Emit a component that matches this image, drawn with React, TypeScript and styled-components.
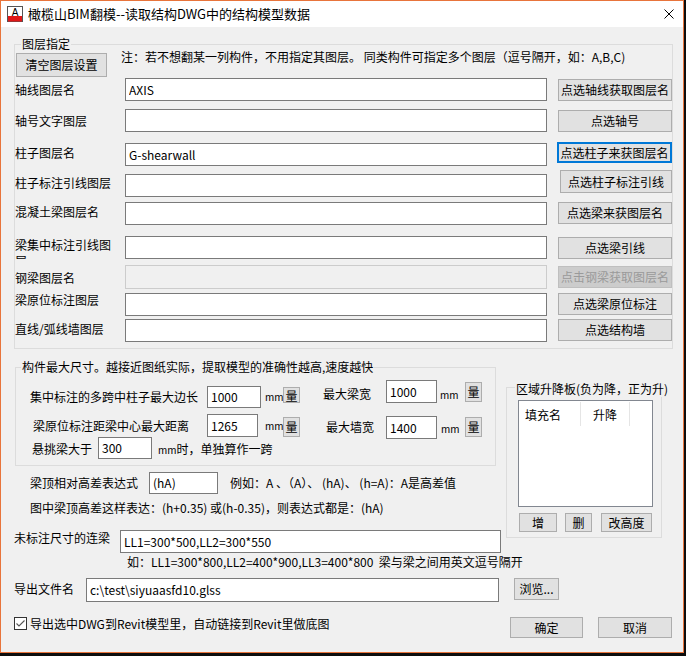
import React from 'react'
import styled, { createGlobalStyle, css } from 'styled-components'

interface Place {
  $ml?: number
  $mt?: number
}

const place = css<Place>`
  flex-shrink: 0;
  margin-left: ${p => p.$ml || 0}px;
  margin-top: ${p => p.$mt || 0}px;
`

const GlobalStyle = createGlobalStyle`
  html, body {
    margin: 0;
    padding: 0;
    background: #0d0d0d;
  }
  body {
    font-family: "Noto Sans CJK SC", "Noto Sans", sans-serif;
    font-size: 12px;
    color: #000;
  }
  * {
    box-sizing: border-box;
  }
`

const Window = styled.div`
  width: 684px;
  height: 653px;
  border: 1px solid #e8743b;
  background: #f0f0f0;
  display: flex;
  flex-direction: column;
  align-items: flex-start;
  overflow: hidden;
`

const TitleBar = styled.div`
  align-self: stretch;
  height: 26px;
  flex-shrink: 0;
  background: #fff;
  display: flex;
  align-items: center;
`

const TitleText = styled.div`
  margin-left: 5px;
  font-size: 13px;
  line-height: 16px;
  white-space: nowrap;
`

const CloseBox = styled.div`
  margin-left: auto;
  margin-right: 9px;
  width: 10px;
  height: 10px;
  display: flex;
`

const Group = styled.div<Place & { $w: number; $pb: number }>`
  ${place};
  position: relative;
  width: ${p => p.$w}px;
  border: 1px solid #dcdcdc;
  padding-bottom: ${p => p.$pb}px;
  display: flex;
  flex-direction: column;
  align-items: flex-start;
`

const Legend = styled.span<{ $left: number; $top?: number }>`
  position: absolute;
  left: ${p => p.$left}px;
  top: ${p => (p.$top ?? -9)}px;
  padding: 0 1px;
  line-height: 16px;
  background: #f0f0f0;
  white-space: nowrap;
`

const Line = styled.div<Place & { $h: number; $stretch?: boolean }>`
  ${place};
  display: flex;
  align-items: flex-start;
  height: ${p => p.$h}px;
  ${p => p.$stretch && css`
    align-self: stretch;
    margin-right: 11px;
  `}
`

const Txt = styled.div<Place & { $w?: number }>`
  ${place};
  width: ${p => (p.$w ? `${p.$w}px` : 'auto')};
  line-height: 16px;
  white-space: nowrap;
`

// unit label, drawn smaller like the dialog's 8pt latin font
const Unit = styled.span`
  font-size: 10px;
`

const LayerLabel = styled.div<{ $mt: number; $wrap?: boolean }>`
  flex-shrink: 0;
  width: 110px;
  padding-right: 10px;
  margin-top: ${p => p.$mt}px;
  line-height: 16px;
  white-space: ${p => (p.$wrap ? 'normal' : 'nowrap')};
  height: ${p => (p.$wrap ? '22px' : 'auto')};
  overflow: hidden;
`

const Field = styled.input<Place & { $w: number; $h: number }>`
  ${place};
  width: ${p => p.$w}px;
  height: ${p => p.$h}px;
  border: 1px solid #7a7a7a;
  background: #fff;
  padding: 0 3px 1px;
  font-family: inherit;
  font-size: 12px;
  color: #000;
  outline: none;

  &:disabled {
    background: #f0f0f0;
    border-color: #cccccc;
  }
`

const Btn = styled.button<Place & { $w: number; $h: number; $focus?: boolean }>`
  ${place};
  width: ${p => p.$w}px;
  height: ${p => p.$h}px;
  padding: 0;
  background: #e1e1e1;
  border: ${p => (p.$focus ? '2px solid #0078d7' : '1px solid #adadad')};
  font-family: inherit;
  font-size: 12px;
  line-height: 16px;
  color: #000;
  white-space: nowrap;

  &:disabled {
    background: #cccccc;
    border-color: #bfbfbf;
    color: #9a9a9a;
  }
`

const Middle = styled.div`
  display: flex;
  align-items: flex-start;
  margin-top: 18px;
  margin-left: 14px;
`

const LeftCol = styled.div`
  width: 491px;
  flex-shrink: 0;
  display: flex;
  flex-direction: column;
  align-items: flex-start;
`

const ListView = styled.div<Place>`
  ${place};
  width: 135px;
  height: 107px;
  border: 1px solid #828790;
  background: #fff;
`

const ListHead = styled.div`
  display: flex;
  height: 24px;
`

const HeadCell = styled.div<{ $w: number; $center?: boolean }>`
  width: ${p => p.$w}px;
  height: 24px;
  margin-top: 1px;
  padding-top: 5px;
  padding-left: ${p => (p.$center ? 0 : 6)}px;
  text-align: ${p => (p.$center ? 'center' : 'left')};
  line-height: 16px;
  border-right: 1px solid #e5e5e5;
`

const CheckBox = styled.div<Place>`
  ${place};
  width: 13px;
  height: 13px;
  display: flex;
`

const layerRows = [
  { label: '轴线图层名', value: 'AXIS', btn: '点选轴线获取图层名', mt: 1, lt: 4, bt: 1 },
  { label: '轴号文字图层', value: '', btn: '点选轴号', mt: 8, lt: 4, bt: 1 },
  { label: '柱子图层名', value: 'G-shearwall', btn: '点选柱子来获图层名', mt: 11, lt: 2, bt: -1, focus: true, bml: 10, bw: 115, bh: 21 },
  { label: '柱子标注引线图层', value: '', btn: '点选柱子标注引线', mt: 8, lt: 1, bt: -4, bml: 13, bw: 112, bh: 23 },
  { label: '混凝土梁图层名', value: '', btn: '点选梁来获图层名', mt: 5, lt: 2, bt: 0 },
  { label: '梁集中标注引线图层', value: '', btn: '点选梁引线', mt: 11, lt: 1, bt: 1, wrap: true },
  { label: '钢梁图层名', value: '', btn: '点击钢梁获取图层名', mt: 6, lt: 5, bt: 1, disabled: true, h: 24 },
  { label: '梁原位标注图层', value: '', btn: '点选梁原位标注', mt: 4, lt: -1, bt: 0 },
  { label: '直线/弧线墙图层', value: '', btn: '点选结构墙', mt: 3, lt: 2, bt: 0 },
]

const AppIcon = () => (
  <svg width="16" height="16" viewBox="0 0 16 16" style={{ marginLeft: 6, flexShrink: 0 }}>
    <rect x="0.5" y="0.5" width="15" height="15" fill="#fff" stroke="#555" />
    <rect x="1" y="10" width="14" height="5.5" fill="#e01818" />
    <text x="8" y="9.5" textAnchor="middle" fontSize="10" fontFamily="Liberation Sans, sans-serif" fill="#000">A</text>
  </svg>
)

export default function App() {
  return (
    <>
      <GlobalStyle />
      <Window>
        <TitleBar>
          <AppIcon />
          <TitleText>橄榄山BIM翻模--读取结构DWG中的结构模型数据</TitleText>
          <CloseBox>
            <svg width="10" height="10" viewBox="0 0 10 10">
              <path d="M0.5 0.5 L9.5 9.5 M9.5 0.5 L0.5 9.5" stroke="#000" strokeWidth="1" />
            </svg>
          </CloseBox>
        </TitleBar>

        <Group $ml={13} $mt={17} $w={659} $pb={6}>
          <Legend $left={6}>图层指定</Legend>
          <Line $mt={8} $h={24}>
            <Btn type="button" $ml={1} $w={91} $h={24}>清空图层设置</Btn>
            <Txt $ml={14} $mt={-4}>注：若不想翻某一列构件，不用指定其图层。 同类构件可指定多个图层（逗号隔开，如：A,B,C)</Txt>
          </Line>
          {layerRows.map(row => (
            <Line key={row.label} $mt={row.mt} $h={row.h || 23}>
              <LayerLabel $mt={row.lt} $wrap={row.wrap}>{row.label}</LayerLabel>
              <Field $w={422} $h={row.h || 23} defaultValue={row.value} disabled={row.disabled} readOnly />
              <Btn
                type="button"
                $ml={row.bml ?? 11}
                $mt={row.bt}
                $w={row.bw ?? 114}
                $h={row.bh ?? 22}
                $focus={row.focus}
                disabled={row.disabled}
              >
                {row.btn}
              </Btn>
            </Line>
          ))}
        </Group>

        <Middle>
          <LeftCol>
            <Group $w={481} $pb={6}>
              <Legend $left={5}>构件最大尺寸。越接近图纸实际，提取模型的准确性越高,速度越快</Legend>
              <Line $mt={11} $h={29}>
                <Txt $ml={14} $mt={10} $w={177}>集中标注的多跨中柱子最大边长</Txt>
                <Field $mt={7} $w={54} $h={22} defaultValue="1000" readOnly />
                <Txt $ml={4} $mt={9} $w={18}><Unit>mm</Unit></Txt>
                <Btn type="button" $mt={8} $w={17} $h={16}>量</Btn>
                <Txt $ml={23} $mt={7} $w={63}>最大梁宽</Txt>
                <Field $mt={1} $w={51} $h={23} defaultValue="1000" readOnly />
                <Txt $ml={3} $mt={7} $w={25}><Unit>mm</Unit></Txt>
                <Btn type="button" $mt={3} $w={17} $h={20}>量</Btn>
              </Line>
              <Line $mt={6} $h={25}>
                <Txt $ml={17} $mt={4} $w={174}>梁原位标注距梁中心最大距离</Txt>
                <Field $w={51} $h={23} defaultValue="1265" readOnly />
                <Txt $ml={7} $mt={3} $w={18}><Unit>mm</Unit></Txt>
                <Btn type="button" $mt={3} $w={17} $h={20}>量</Btn>
                <Txt $ml={26} $mt={5} $w={60}>最大墙宽</Txt>
                <Field $mt={2} $w={51} $h={23} defaultValue="1400" readOnly />
                <Txt $ml={4} $mt={6} $w={24}><Unit>mm</Unit></Txt>
                <Btn type="button" $mt={3} $w={17} $h={20}>量</Btn>
              </Line>
              <Line $mt={-2} $h={22}>
                <Txt $ml={16} $mt={4} $w={66}>悬挑梁大于</Txt>
                <Field $w={54} $h={22} defaultValue="300" readOnly />
                <Txt $ml={6} $mt={4}><Unit>mm</Unit>时，单独算作一跨</Txt>
              </Line>
            </Group>

            <Line $mt={6} $h={22}>
              <Txt $ml={15} $mt={3} $w={119}>梁顶相对高差表达式</Txt>
              <Field $w={69} $h={22} defaultValue="(hA)" readOnly />
              <Txt $ml={12} $mt={3}>例如：A 、（A）、 (hA)、 (h=A)：A是高差值</Txt>
            </Line>
            <Txt $ml={15} $mt={6}>图中梁顶高差这样表达：(h+0.35) 或(h-0.35)，则表达式都是：(hA)</Txt>
            <Line $mt={14} $h={23}>
              <Txt $ml={-1} $w={106}>未标注尺寸的连梁</Txt>
              <Field $w={381} $h={23} defaultValue="LL1=300*500,LL2=300*550" readOnly />
            </Line>
            <Txt $ml={112} $mt={1}>如：LL1=300*800,LL2=400*900,LL3=400*800&nbsp; 梁与梁之间用英文逗号隔开</Txt>
          </LeftCol>

          <Group $w={156} $mt={20} $pb={5}>
            <Legend $left={8} $top={-7}>区域升降板(负为降，正为升)</Legend>
            <ListView $ml={11} $mt={12}>
              <ListHead>
                <HeadCell $w={62}>填充名</HeadCell>
                <HeadCell $w={49} $center>升降</HeadCell>
              </ListHead>
            </ListView>
            <Line $mt={6} $h={19}>
              <Btn type="button" $ml={12} $w={38} $h={19}>增</Btn>
              <Btn type="button" $ml={8} $w={27} $h={19}>删</Btn>
              <Btn type="button" $ml={9} $w={51} $h={19}>改高度</Btn>
            </Line>
          </Group>
        </Middle>

        <Line $mt={8} $h={24}>
          <Txt $ml={13} $mt={3} $w={72}>导出文件名</Txt>
          <Field $w={413} $h={24} defaultValue={'c:\\test\\siyuaasfd10.glss'} readOnly />
          <Btn type="button" $ml={15} $w={45} $h={22}>浏览...</Btn>
        </Line>

        <Line $mt={15} $h={21} $stretch>
          <CheckBox $ml={13}>
            <svg width="13" height="13" viewBox="0 0 13 13">
              <rect x="0.5" y="0.5" width="12" height="12" fill="#fff" stroke="#333" />
              <polyline points="2.5,6.5 5,9 10.5,3.5" fill="none" stroke="#555" strokeWidth="1.1" />
            </svg>
          </CheckBox>
          <Txt $ml={3} $mt={-1}>导出选中DWG到Revit模型里，自动链接到Revit里做底图</Txt>
          <Btn type="button" style={{ marginLeft: 'auto' }} $w={73} $h={21}>确定</Btn>
          <Btn type="button" $ml={15} $w={74} $h={21}>取消</Btn>
        </Line>
      </Window>
    </>
  )
}
